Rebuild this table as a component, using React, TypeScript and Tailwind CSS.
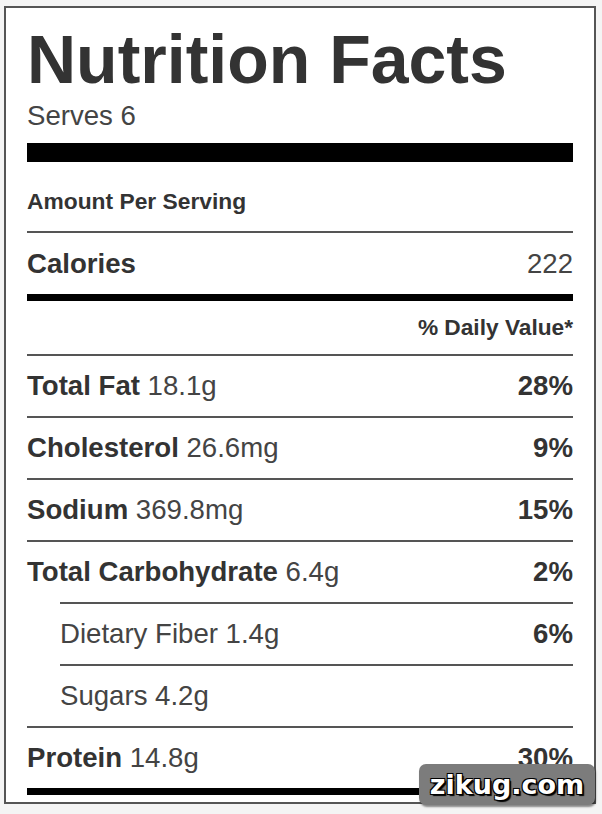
import React from 'react'

type Row = { label: string; amount?: string; dv?: string; indent?: boolean }

const ROWS: Row[] = [
  { label: 'Total Fat', amount: '18.1g', dv: '28%' },
  { label: 'Cholesterol', amount: '26.6mg', dv: '9%' },
  { label: 'Sodium', amount: '369.8mg', dv: '15%' },
  { label: 'Total Carbohydrate', amount: '6.4g', dv: '2%' },
  { label: 'Dietary Fiber 1.4g', dv: '6%', indent: true },
  { label: 'Sugars 4.2g', indent: true },
  { label: 'Protein', amount: '14.8g', dv: '30%' },
]

function NutrientRow({ label, amount, dv, indent }: Row) {
  return (
    <div className={`flex h-[62px] items-center justify-between border-t-2 border-[#555] text-[27.6px] leading-none ${indent ? 'ml-[33px]' : ''}`}>
      <p className="whitespace-nowrap">
        {indent ? (
          <span className="text-[#444]">{label}</span>
        ) : (
          <>
            <span className="font-bold text-[#333]">{label}</span>{' '}
            <span className="text-[#444]">{amount}</span>
          </>
        )}
      </p>
      {dv && <p className="font-bold text-[#333]">{dv}</p>}
    </div>
  )
}

export default function App() {
  return (
    <div className="relative h-[814px] w-[602px] bg-[#f4f4f4] px-[4px] pt-[6px] font-['Liberation_Sans',Arial,sans-serif]">
      <div className="flex h-[798px] w-[592px] flex-col border-2 border-[#555] bg-white px-[21px]">
        {/* Header */}
        <h1 className="mt-[17px] h-[68px] text-[68px] font-bold leading-none text-[#333]">Nutrition Facts</h1>
        <p className="mt-[9px] h-[28px] text-[27.6px] leading-none text-[#444]">Serves 6</p>
        <div className="mt-[13px] h-[19px] bg-black" />

        {/* Calories */}
        <div className="h-[69px] pt-[28px]">
          <p className="text-[22.8px] font-bold leading-none text-[#333]">Amount Per Serving</p>
        </div>
        <div className="flex h-[63px] items-center justify-between border-t-2 border-[#555] text-[27.6px] leading-none">
          <p className="font-bold text-[#333]">Calories</p>
          <p className="text-[#444]">222</p>
        </div>
        <div className="h-[7px] bg-black" />
        <div className="flex h-[53px] items-center justify-end">
          <p className="text-[22.7px] font-bold leading-none text-[#333]">% Daily Value*</p>
        </div>

        {/* Nutrients */}
        {ROWS.map((r) => (
          <NutrientRow key={r.label} {...r} />
        ))}
        <div className="h-[7px] bg-black" />
      </div>

      {/* Watermark */}
      <div className="absolute left-[419px] top-[764px] flex h-[41px] w-[176px] items-center justify-center rounded-[7px] bg-[#7c7c7c] shadow-[1px_2px_2px_rgba(0,0,0,0.45)]">
        <span className="font-['DejaVu_Sans',sans-serif] text-[27px] font-bold leading-none text-white [text-shadow:1px_1px_0_#000,-1px_-1px_0_#000,1px_-1px_0_#000,-1px_1px_0_#000,2px_2px_1px_#000]">
          zikug.com
        </span>
      </div>
    </div>
  )
}
